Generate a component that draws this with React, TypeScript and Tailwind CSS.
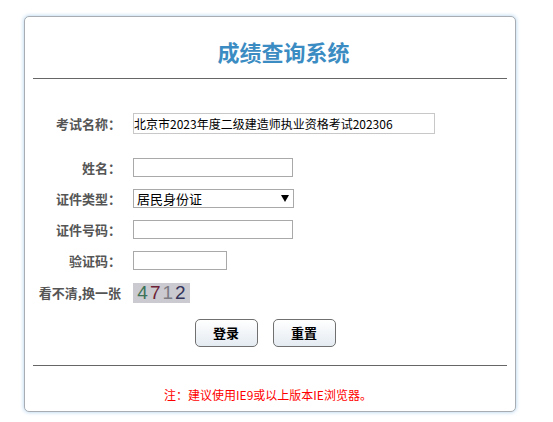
const cjk = '"Noto Sans CJK SC", "Liberation Sans", sans-serif';

function Label({ children }: { children: string }) {
  return (
    <div className="w-[96px] shrink-0 text-right text-[13px] font-bold text-[#555]" style={{ fontFamily: cjk }}>
      {children}
    </div>
  );
}

export default function App() {
  return (
    <div className="min-h-screen bg-white pl-[24px] pt-[16px]" style={{ fontFamily: cjk }}>
      <div className="flex h-[396px] w-[492px] flex-col rounded-[5px] border border-[#a7adb3] bg-white shadow-[0_0_4px_#a9cdea]">
        <h1 className="pl-[27px] pt-[19px] text-center text-[22px] font-bold leading-[30px] text-[#3b8cc2]">
          成绩查询系统
        </h1>
        <div className="mx-[8px] mt-[12px] h-px bg-[#666]" />

        <div className="mt-[34px] flex h-[21px] items-center">
          <Label>考试名称：</Label>
          <input
            readOnly
            value="北京市2023年度二级建造师执业资格考试202306"
            className="ml-[12px] h-[21px] w-[302px] border border-[#c8c8c8] px-0 text-[12px] text-black outline-none"
          />
        </div>

        <div className="mt-[18px] flex h-[31px] items-center">
          <Label>姓名：</Label>
          <input className="ml-[12px] h-[19px] w-[160px] border border-[#a9a9a9] outline-none" />
        </div>

        <div className="flex h-[31px] items-center">
          <Label>证件类型：</Label>
          <div className="relative ml-[12px] flex h-[19px] w-[161px] items-center">
            <select className="h-[19px] w-[161px] appearance-none border border-[#a9a9a9] bg-white py-0 pl-[3px] text-[13px] leading-[17px] text-black outline-none">
              <option>居民身份证</option>
            </select>
            <span className="pointer-events-none absolute right-[5px] top-[6px] h-0 w-0 border-x-[4px] border-t-[7px] border-x-transparent border-t-black" />
          </div>
        </div>

        <div className="flex h-[31px] items-center">
          <Label>证件号码：</Label>
          <input className="ml-[12px] h-[19px] w-[160px] border border-[#a9a9a9] outline-none" />
        </div>

        <div className="flex h-[31px] items-center">
          <Label>验证码：</Label>
          <input className="ml-[12px] h-[19px] w-[94px] border border-[#a9a9a9] outline-none" />
        </div>

        <div className="flex h-[33px] items-center">
          <Label>看不清,换一张</Label>
          <div
            className="ml-[12px] flex h-[20px] w-[57px] items-center justify-center gap-[2px] bg-[#cacad0] text-[19px] leading-none"
            style={{ fontFamily: '"Liberation Sans", sans-serif' }}
          >
            <span className="text-[#3c7358]">4</span>
            <span className="text-[#6e2236]">7</span>
            <span className="text-[#7c7c84]">1</span>
            <span className="text-[#34345a]">2</span>
          </div>
        </div>

        <div className="mt-[10px] flex justify-center gap-[15px] pr-[10px]">
          <button className="h-[28px] w-[63px] rounded-[5px] border border-[#707070] bg-gradient-to-b from-white to-[#e4ebf2] text-[13px] font-bold text-black">
            登录
          </button>
          <button className="h-[28px] w-[63px] rounded-[5px] border border-[#707070] bg-gradient-to-b from-white to-[#e4ebf2] text-[13px] font-bold text-black">
            重置
          </button>
        </div>

        <div className="mx-[8px] mt-[18px] h-px bg-[#666]" />

        <p className="mt-[21px] pr-[4px] text-center text-[12px] leading-[16px] text-[#f00]">
          注：建议使用IE9或以上版本IE浏览器。
        </p>
      </div>
    </div>
  );
}
